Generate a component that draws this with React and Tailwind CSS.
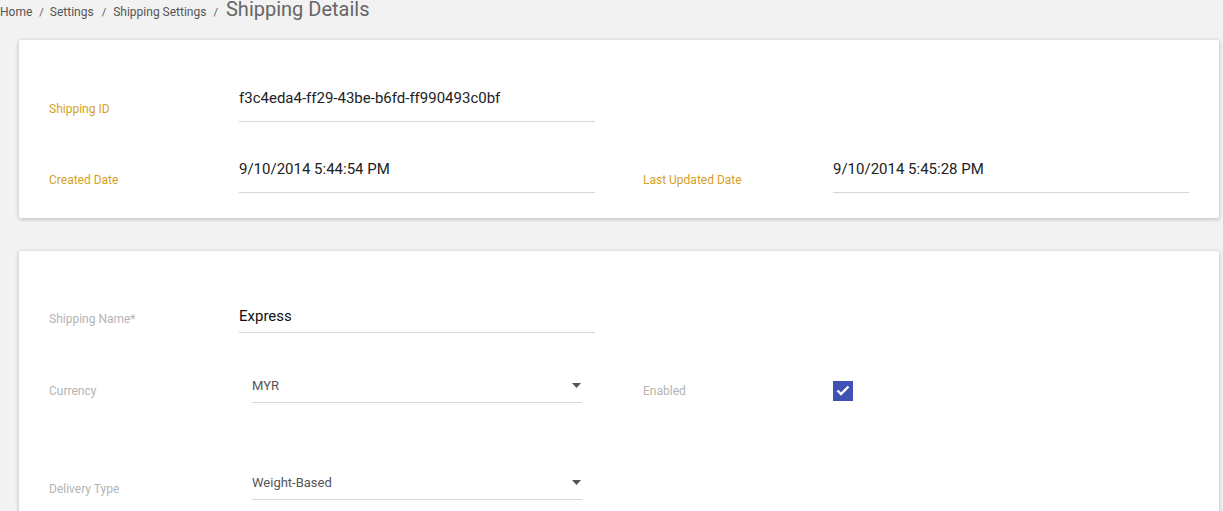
const font = { fontFamily: "Roboto, 'Liberation Sans', sans-serif" };

function ReadField({ label, value }) {
  return (
    <div className="flex items-end">
      <div className="w-[190px] shrink-0 mb-[5px] text-[12px] leading-[16px] text-[#d6a023]">{label}</div>
      <div className="w-[356px] border-b border-[#d6d6d6] pb-[11px] text-[15px] leading-[24px] text-[#222]">{value}</div>
    </div>
  );
}

function Label({ children, className = "" }) {
  return <div className={"w-[190px] shrink-0 text-[12px] leading-[16px] text-[#b4b4b4] " + className}>{children}</div>;
}

function Select({ value }) {
  return (
    <div className="ml-[13px] w-[330px] border-b border-[#d6d6d6] pb-[6px] flex items-center justify-between text-[13px] leading-[20px] text-[#555]">
      <span>{value}</span>
      <svg width="9" height="5" viewBox="0 0 9 5" className="mr-[1px]">
        <path d="M0 0 L9 0 L4.5 5 Z" fill="#555" />
      </svg>
    </div>
  );
}

export default function App() {
  return (
    <div className="min-h-screen bg-[#f2f2f2] overflow-hidden" style={font}>
      <div className="flex items-baseline -mt-[3px] text-[12px] text-[#555]">
        <span>Home</span>
        <span className="ml-[7px] mr-[6px] text-[11px]">/</span>
        <span>Settings</span>
        <span className="ml-[8px] mr-[7px] text-[11px]">/</span>
        <span>Shipping Settings</span>
        <span className="ml-[7px] mr-[8px] text-[11px]">/</span>
        <span className="text-[20px] leading-[24px] text-[#666]">Shipping Details</span>
      </div>

      <div className="ml-[19px] mt-[18px] w-[1200px] bg-white rounded-[2px] shadow-[0_1px_4px_rgba(0,0,0,0.25)] px-[30px] pt-[46px] pb-[25px]">
        <div className="grid grid-cols-[546px_546px] gap-x-[48px]">
          <ReadField label="Shipping ID" value="f3c4eda4-ff29-43be-b6fd-ff990493c0bf" />
          <div />
        </div>
        <div className="grid grid-cols-[546px_546px] gap-x-[48px] mt-[35px]">
          <ReadField label="Created Date" value="9/10/2014 5:44:54 PM" />
          <ReadField label="Last Updated Date" value="9/10/2014 5:45:28 PM" />
        </div>
      </div>

      <div className="ml-[19px] mt-[33px] w-[1200px] h-[400px] bg-white rounded-[2px] shadow-[0_1px_4px_rgba(0,0,0,0.25)] px-[30px] pt-[53px]">
        <div className="flex items-end">
          <Label className="mb-[6px]">Shipping Name*</Label>
          <div className="w-[356px] border-b border-[#d6d6d6] pb-[4px] text-[15px] leading-[24px] text-[#111]">Express</div>
        </div>
        <div className="grid grid-cols-[546px_546px] gap-x-[48px] mt-[43px]">
          <div className="flex items-end">
            <Label className="mb-[4px]">Currency</Label>
            <Select value="MYR" />
          </div>
          <div className="flex items-end">
            <Label className="mb-[4px]">Enabled</Label>
            <div className="mb-[2px] w-[20px] h-[20px] bg-[#3f51b5] flex items-center justify-center">
              <svg width="14" height="11" viewBox="0 0 14 11">
                <path d="M1.5 5.5 L5 9 L12.5 1.5" stroke="#fff" strokeWidth="2.4" fill="none" />
              </svg>
            </div>
          </div>
        </div>
        <div className="flex items-end mt-[70px]">
          <Label className="mb-[4px]">Delivery Type</Label>
          <div className="pb-[1px]">
            <Select value="Weight-Based" />
          </div>
        </div>
      </div>
    </div>
  );
}
